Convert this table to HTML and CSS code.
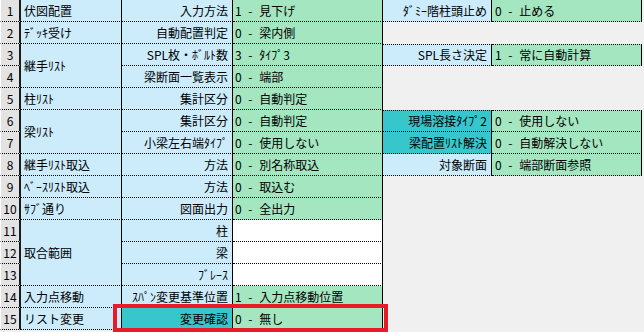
FILE: index.html
```html
<!DOCTYPE html>
<html lang="ja">
<head>
    <meta charset="UTF-8">
    <title>設定一覧</title>
    <link rel="stylesheet" href="styles.css">
</head>
<body>

<div class="sheet">
    <div class="grid">
        <!-- 1 -->
        <div class="num">1</div>
        <div class="item">伏図配置</div>
        <div class="key">入力方法</div>
        <div class="val">1 - 見下げ</div>
        <div class="key side">ﾀﾞﾐｰ階柱頭止め</div>
        <div class="val side">0 - 止める</div>

        <!-- 2 -->
        <div class="num">2</div>
        <div class="item">ﾃﾞｯｷ受け</div>
        <div class="key">自動配置判定</div>
        <div class="val">0 - 梁内側</div>

        <!-- 3, 4 -->
        <div class="num">3</div>
        <div class="item span2">継手ﾘｽﾄ</div>
        <div class="key">SPL枚・ﾎﾞﾙﾄ数</div>
        <div class="val">3 - ﾀｲﾌﾟ3</div>
        <div class="key side top">SPL長さ決定</div>
        <div class="val side top">1 - 常に自動計算</div>

        <div class="num">4</div>
        <div class="key">梁断面一覧表示</div>
        <div class="val">0 - 端部</div>

        <!-- 5 -->
        <div class="num">5</div>
        <div class="item">柱ﾘｽﾄ</div>
        <div class="key">集計区分</div>
        <div class="val">0 - 自動判定</div>

        <!-- 6, 7 -->
        <div class="num">6</div>
        <div class="item span2">梁ﾘｽﾄ</div>
        <div class="key">集計区分</div>
        <div class="val">0 - 自動判定</div>
        <div class="key side top hot">現場溶接ﾀｲﾌﾟ2</div>
        <div class="val side top">0 - 使用しない</div>

        <div class="num">7</div>
        <div class="key">小梁左右端ﾀｲﾌﾟ</div>
        <div class="val">0 - 使用しない</div>
        <div class="key side hot">梁配置ﾘｽﾄ解決</div>
        <div class="val side">0 - 自動解決しない</div>

        <!-- 8 -->
        <div class="num">8</div>
        <div class="item">継手ﾘｽﾄ取込</div>
        <div class="key">方法</div>
        <div class="val">0 - 別名称取込</div>
        <div class="key side">対象断面</div>
        <div class="val side">0 - 端部断面参照</div>

        <!-- 9 -->
        <div class="num">9</div>
        <div class="item">ﾍﾞｰｽﾘｽﾄ取込</div>
        <div class="key">方法</div>
        <div class="val">0 - 取込む</div>

        <!-- 10 -->
        <div class="num">10</div>
        <div class="item">ｻﾌﾞ通り</div>
        <div class="key">図面出力</div>
        <div class="val">0 - 全出力</div>

        <!-- 11 - 13 -->
        <div class="num">11</div>
        <div class="item span3">取合範囲</div>
        <div class="key">柱</div>
        <div class="val blank"></div>

        <div class="num">12</div>
        <div class="key">梁</div>
        <div class="val blank"></div>

        <div class="num">13</div>
        <div class="key">ﾌﾞﾚｰｽ</div>
        <div class="val blank"></div>

        <!-- 14 -->
        <div class="num">14</div>
        <div class="item">入力点移動</div>
        <div class="key">ｽﾊﾟﾝ変更基準位置</div>
        <div class="val">1 - 入力点移動位置</div>

        <!-- 15 -->
        <div class="num">15</div>
        <div class="item">リスト変更</div>
        <div class="key hot">変更確認</div>
        <div class="val">0 - 無し</div>
    </div>

    <div class="mark"></div>
</div>

</body>
</html>
```

FILE: styles.css
```css
body {
    margin: 0;
    padding: 0;
    background-color: #f0f0f0;
    font-family: "Noto Sans CJK JP", "Noto Sans", sans-serif;
    font-size: 12px;
    color: #000;
}

.sheet {
    position: relative;
    width: 644px;
    height: 332px;
    overflow: hidden;
}

.grid {
    display: grid;
    grid-template-columns: 21px 101px 111px 150px 109px 150px;
    grid-auto-rows: 22px;
}

.grid > div {
    box-sizing: border-box;
    display: flex;
    align-items: center;
    white-space: pre;
    border-right: 1px solid #000;
    border-bottom: 1px dotted #000;
    line-height: 1;
}

.num {
    grid-column: 1;
    justify-content: center;
    background-color: #e3e3e3;
    border-left: 1px solid #fff;
    border-right: 2px solid #1a1a1a !important;
}

.item {
    background-color: #ccecfc;
    padding-left: 3px;
}

.span2 {
    grid-row: span 2;
}

.span3 {
    grid-row: span 3;
}

.key {
    background-color: #ccecfc;
    justify-content: flex-end;
    padding-right: 4px;
}

.val {
    background-color: #a4e6c0;
    padding-left: 2px;
    word-spacing: 4px;
}

.val.blank {
    background-color: #fff;
}

.side.top {
    border-top: 1px dotted #000;
}

.key.hot {
    background-color: #36c6cc;
}

.val.side {
    padding-left: 3px;
}

/* red frame round the row being edited */
.mark {
    position: absolute;
    left: 113px;
    top: 304px;
    width: 275px;
    height: 28px;
    box-sizing: border-box;
    border: 4px solid #e81c28;
}
```
